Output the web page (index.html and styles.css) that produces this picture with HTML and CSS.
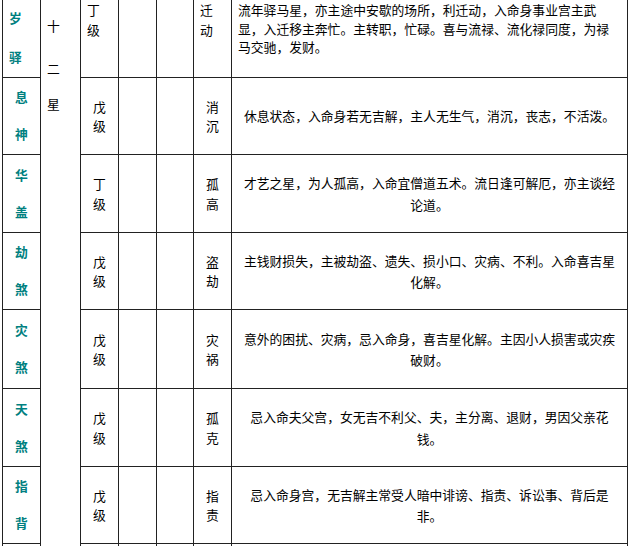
FILE: index.html
```html
<!DOCTYPE html>
<html lang="zh-CN">
<head>
<meta charset="utf-8">
<title>将前十二星</title>
<link rel="stylesheet" href="styles.css">
</head>
<body>
<table class="stars">
  <colgroup>
    <col class="c-name">
    <col class="c-group">
    <col class="c-grade">
    <col class="c-blank">
    <col class="c-blank">
    <col class="c-effect">
    <col class="c-desc">
  </colgroup>
  <tbody>
    <tr class="row-first">
      <td class="name">岁<br><br>驿</td>
      <td class="group" rowspan="8"><span class="g1">十</span><span class="g2">二</span><span class="g3">星</span></td>
      <td class="grade">丁<br>级</td>
      <td class="blank"></td>
      <td class="blank"></td>
      <td class="effect">迁<br>动</td>
      <td class="desc">流年驿马星，亦主途中安歇的场所，利迁动，入命身事业宫主武显，入迁移主奔忙。主转职，忙碌。喜与流禄、流化禄同度，为禄马交驰，发财。</td>
    </tr>
    <tr class="h77">
      <td class="name">息<br><br>神</td>
      <td class="grade">戊<br>级</td>
      <td class="blank"></td>
      <td class="blank"></td>
      <td class="effect">消<br>沉</td>
      <td class="desc">休息状态，入命身若无吉解，主人无生气，消沉，丧志，不活泼。</td>
    </tr>
    <tr class="h78">
      <td class="name">华<br><br>盖</td>
      <td class="grade">丁<br>级</td>
      <td class="blank"></td>
      <td class="blank"></td>
      <td class="effect">孤<br>高</td>
      <td class="desc">才艺之星，为人孤高，入命宜僧道五术。流日逢可解厄，亦主谈经论道。</td>
    </tr>
    <tr class="h77">
      <td class="name">劫<br><br>煞</td>
      <td class="grade">戊<br>级</td>
      <td class="blank"></td>
      <td class="blank"></td>
      <td class="effect">盗<br>劫</td>
      <td class="desc">主钱财损失，主被劫盗、遗失、损小口、灾病、不利。入命喜吉星化解。</td>
    </tr>
    <tr class="h79">
      <td class="name">灾<br><br>煞</td>
      <td class="grade">戊<br>级</td>
      <td class="blank"></td>
      <td class="blank"></td>
      <td class="effect">灾<br>祸</td>
      <td class="desc">意外的困扰、灾病，忌入命身，喜吉星化解。主因小人损害或灾疾破财。</td>
    </tr>
    <tr class="h78">
      <td class="name">天<br><br>煞</td>
      <td class="grade">戊<br>级</td>
      <td class="blank"></td>
      <td class="blank"></td>
      <td class="effect">孤<br>克</td>
      <td class="desc">忌入命夫父宫，女无吉不利父、夫，主分离、退财，男因父亲花钱。</td>
    </tr>
    <tr class="h77">
      <td class="name">指<br><br>背</td>
      <td class="grade">戊<br>级</td>
      <td class="blank"></td>
      <td class="blank"></td>
      <td class="effect">指<br>责</td>
      <td class="desc">忌入命身宫，无吉解主常受人暗中诽谤、指责、诉讼事、背后是非。</td>
    </tr>
    <tr class="h78">
      <td class="name"></td>
      <td class="grade"></td>
      <td class="blank"></td>
      <td class="blank"></td>
      <td class="effect"></td>
      <td class="desc"></td>
    </tr>
  </tbody>
</table>
</body>
</html>
```

FILE: styles.css
```css
html, body {
  margin: 0;
  padding: 0;
  overflow: hidden;
  background: #ffffff;
}

body {
  font-family: "Noto Sans CJK SC", "Noto Sans", sans-serif;
  font-size: 12.8px;
  color: #000000;
}

.stars {
  border-collapse: collapse;
  table-layout: fixed;
  width: 625px;
  margin: -20px 0 0 2px;
}

.c-name { width: 38px; }
.c-group { width: 40px; }
.c-grade { width: 38px; }
.c-blank { width: 37.5px; }
.c-effect { width: 38px; }
.c-desc { width: 396px; }

.stars td {
  border: 1px solid #222222;
  padding: 0;
  text-align: center;
  vertical-align: middle;
}

.stars .name {
  color: #008080;
  font-weight: bold;
  line-height: 18.5px;
}

.stars .grade,
.stars .effect {
  line-height: 19.5px;
}

.stars .desc {
  line-height: 21.5px;
  padding: 0 8px;
}

.h77 { height: 77px; }
.h78 { height: 78px; }
.h79 { height: 79px; }

.row-first { height: 97px; }

.stars .row-first td {
  vertical-align: top;
  text-align: left;
}

.stars .row-first .name {
  line-height: 19.5px;
  padding: 27px 0 0 6px;
}

.stars .row-first .grade,
.stars .row-first .effect {
  line-height: 20px;
  padding: 19px 0 0 6px;
}

.stars .row-first .desc {
  line-height: 18.5px;
  padding: 20px 10px 0 6px;
}

.stars td.group {
  vertical-align: top;
  text-align: left;
  padding: 36px 0 0 6px;
  line-height: 18.5px;
}

.group span {
  display: block;
}

.group .g2 { margin-top: 24px; }
.group .g3 { margin-top: 16.5px; }
```
